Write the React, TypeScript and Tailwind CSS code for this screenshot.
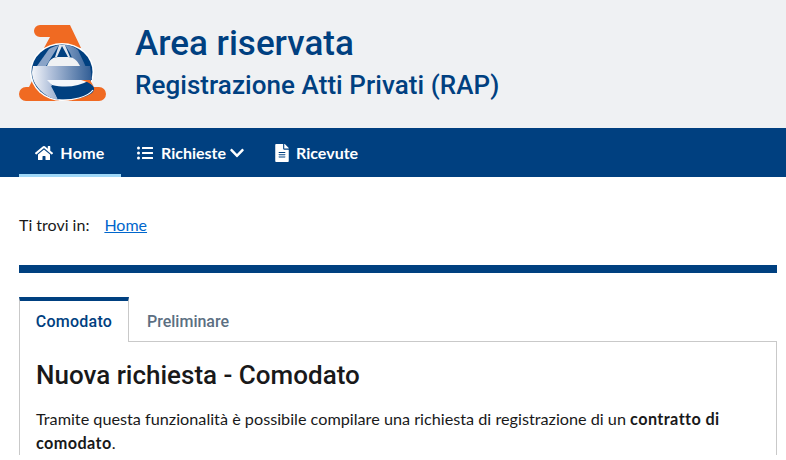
import { FaChevronDown, FaFileAlt, FaHome, FaListUl } from "react-icons/fa";

function Logo() {
  return (
    <svg width="88" height="80" viewBox="19 20 88 80" className="shrink-0">
      <defs>
        <linearGradient id="eband" x1="0" x2="1" y1="0" y2="0">
          <stop offset="0" stopColor="#f4f6fa" />
          <stop offset="0.3" stopColor="#b4c3dc" />
          <stop offset="1" stopColor="#2f5c94" />
        </linearGradient>
        <linearGradient id="wedge" x1="0" x2="1" y1="0" y2="0">
          <stop offset="0" stopColor="#7f9cc3" />
          <stop offset="1" stopColor="#2f5c94" />
        </linearGradient>
      </defs>
      {/* orange A */}
      <path d="M40 22 H70 L81 45 H44 L50 34 H40 a6 6 0 0 1 0 -12 Z" fill="#f06a22" />
      <path d="M33 76 L29 84 H26 a7 7 0 0 0 0 14 H99 a7 7 0 0 0 0 -14 H94 C90 83 86 80 80 78 Z" fill="#f06a22" />
      {/* disc */}
      <ellipse cx="62" cy="69" rx="32" ry="29" fill="#fff" />
      <ellipse cx="62" cy="69" rx="30.500" ry="27.500" fill="#004080" />
      <path d="M49 46 C52 44 55 43 59 42 L46 63 H37 Z" fill="#8aa4c8" />
      <path d="M65 42 C70 42 75 44 78 47 L92 77 H81 L70 50 Z" fill="url(#wedge)" />
      <path d="M59 42 H65 L70 54 H55 Z" fill="#dfe5ee" />
      <path d="M62 43 L57 54 H68 Z" fill="#004080" />
      {/* e */}
      <path d="M47 63 C49 57 53 54 58 54 H68 C73 54 77 57 80 63 Z" fill="#eff1f3" />
      <path d="M33 63 H90 L92 77 H58 C52 77 50 81 53 85 L58 97 C44 94 32 82 32 69 Z" fill="url(#eband)" />
      <path d="M47 77 H90 C78 84 65 85 52 82 Z" fill="#f4f6fa" />
      <path d="M51 83 C64 86 78 85 88 79 C94 82 96 86 92 90 C84 96 68 98 58 96 Z" fill="#004080" />
      <path d="M81 77 H90 L94 84 C92 81 88 79 81 77 Z" fill="#f06a22" />
      <path d="M59 97 C72 98 88 94 93 87" fill="none" stroke="#fff" strokeWidth="1.200" />
    </svg>
  );
}

export default function App() {
  return (
    <div className="h-[460px] w-[786px] overflow-hidden bg-white font-['Lato',sans-serif] text-[#19191a]">
      <header className="flex h-[128px] items-center bg-[#eff1f3] pb-[2px] pl-[19px]">
        <Logo />
        <div className="ml-[28px] font-['Roboto',sans-serif] text-[#004080]">
          <h1 className="text-[35px] font-medium leading-[44px]">Area riservata</h1>
          <p className="text-[26px] font-medium leading-[38px] tracking-[0.06px]">Registrazione Atti Privati (RAP)</p>
        </div>
      </header>

      <nav className="flex h-[49px] items-stretch bg-[#004080] pl-[19px] text-[16px] font-bold text-white">
        <a className="flex w-[102px] items-center justify-center gap-[7px] border-b-[3px] border-[#9fd8f8] pt-[3px] tracking-[0.3px]">
          <FaHome className="size-[18px]" />
          Home
        </a>
        <a className="ml-[16px] flex items-center gap-[8px]">
          <FaListUl className="size-[16px]" />
          <span className="flex items-center gap-[3px]">
            Richieste
            <FaChevronDown className="size-[16px]" />
          </span>
        </a>
        <a className="ml-[30px] flex items-center gap-[7px]">
          <FaFileAlt className="h-[18px] w-[14px]" />
          Ricevute
        </a>
      </nav>

      <main className="pl-[19px] pr-[9px]">
        <div className="flex gap-[15px] pt-[38px] text-[16px] leading-[20px]">
          <span>Ti trovi in:</span>
          <a className="text-[#0066cc] underline">Home</a>
        </div>

        <div className="mt-[30px] h-[8px] bg-[#004080]" />

        <div className="mt-[24px] flex h-[45px] items-stretch font-['Roboto',sans-serif] text-[16px] font-medium">
          <div className="flex w-[110px] items-center justify-center border-x border-t-[4px] border-x-[#c9c9c9] border-t-[#004080] tracking-[0.25px] text-[#004080]">
            Comodato
          </div>
          <div className="flex flex-1 items-center border-b border-[#c9c9c9] pl-[18px] pt-[6px] text-[#5c6f82]">
            Preliminare
          </div>
        </div>

        <section className="border-x border-[#c9c9c9] px-[16px] pt-[15px]">
          <h2 className="font-['Roboto',sans-serif] text-[26px] font-medium leading-[36px]">
            Nuova richiesta - Comodato
          </h2>
          <p className="mt-[14px] text-[16.230px] leading-[24px]">
            Tramite questa funzionalità è possibile compilare una richiesta di registrazione di un{" "}
            <strong className="tracking-[0.4px]">contratto di comodato</strong>.
          </p>
        </section>
      </main>
    </div>
  );
}
